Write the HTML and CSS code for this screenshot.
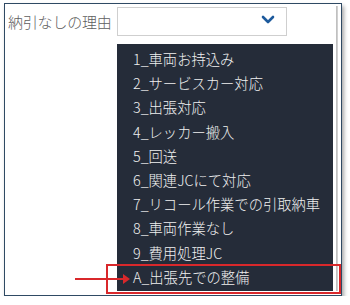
FILE: index.html
```html
<!DOCTYPE html>
<html lang="ja">
<head>
    <meta charset="UTF-8">
    <title>納引なしの理由</title>
    <link rel="stylesheet" href="styles.css">
</head>
<body>
    <div class="frame">
        <div class="form-row">
            <label class="field-label" for="reason">納引なしの理由</label>
            <div class="select-box" id="reason">
                <svg class="chevron" width="14" height="9" viewBox="0 0 14 9">
                    <path d="M2 2 L7 7 L12 2" fill="none" stroke="#1d5a9c" stroke-width="2.6" stroke-linecap="round" stroke-linejoin="round"/>
                </svg>
            </div>
        </div>

        <ul class="dropdown">
            <li>1_車両お持込み</li>
            <li>2_サービスカー対応</li>
            <li>3_出張対応</li>
            <li>4_レッカー搬入</li>
            <li>5_回送</li>
            <li>6_関連JCにて対応</li>
            <li>7_リコール作業での引取納車</li>
            <li>8_車両作業なし</li>
            <li>9_費用処理JC</li>
            <li>A_出張先での整備</li>
        </ul>

        <div class="edge-shade"></div>
        <div class="highlight"></div>
        <div class="pointer">
            <span class="pointer-line"></span>
            <span class="pointer-head"></span>
        </div>
    </div>
</body>
</html>
```

FILE: styles.css
```css
body {
    margin: 0;
    padding: 0;
    background-color: #ffffff;
    font-family: "Noto Sans CJK JP", "Noto Sans", sans-serif;
}

.frame {
    position: relative;
    width: 336px;
    height: 291px;
    margin: 3px 0 0 4px;
    border: 1px solid #2f4a64;
    box-shadow: 2px 3px 4px rgba(0, 0, 0, 0.35);
    background-color: #fff;
    overflow: hidden;
}

.form-row {
    display: flex;
    align-items: center;
    padding: 3px 0 0 3px;
}

.field-label {
    width: 109px;
    font-size: 15px;
    font-weight: 300;
    color: #5e5e5e;
    letter-spacing: -0.2px;
}

.select-box {
    width: 170px;
    height: 29px;
    border: 1px solid #cfcfcf;
    display: flex;
    align-items: center;
    justify-content: flex-end;
    padding-right: 11px;
    box-sizing: border-box;
}

.chevron {
    display: block;
    margin-top: -4px;
}

.dropdown {
    position: absolute;
    left: 112px;
    top: 40px;
    width: 216px;
    height: 247px;
    margin: 0;
    padding: 3px 0 0;
    box-sizing: border-box;
    list-style: none;
    background-color: #252c39;
}

.dropdown li {
    height: 24.2px;
    line-height: 24px;
    padding-left: 16px;
    font-size: 14.3px;
    font-weight: 300;
    color: #f0f0f0;
    white-space: nowrap;
}

.edge-shade {
    position: absolute;
    right: 3px;
    top: 2px;
    bottom: 4px;
    width: 2px;
    background: linear-gradient(to right, #b8b8b8, #d8d8d8);
}

.highlight {
    position: absolute;
    left: 101px;
    top: 260px;
    width: 231px;
    height: 26px;
    border: 2px solid #d9282b;
}

.pointer {
    position: absolute;
    left: 70px;
    top: 270px;
    display: flex;
    align-items: center;
}

.pointer-line {
    width: 48px;
    height: 2px;
    background-color: #d9282b;
}

.pointer-head {
    width: 0;
    height: 0;
    border-top: 5px solid transparent;
    border-bottom: 5px solid transparent;
    border-left: 7px solid #d9282b;
}
```
